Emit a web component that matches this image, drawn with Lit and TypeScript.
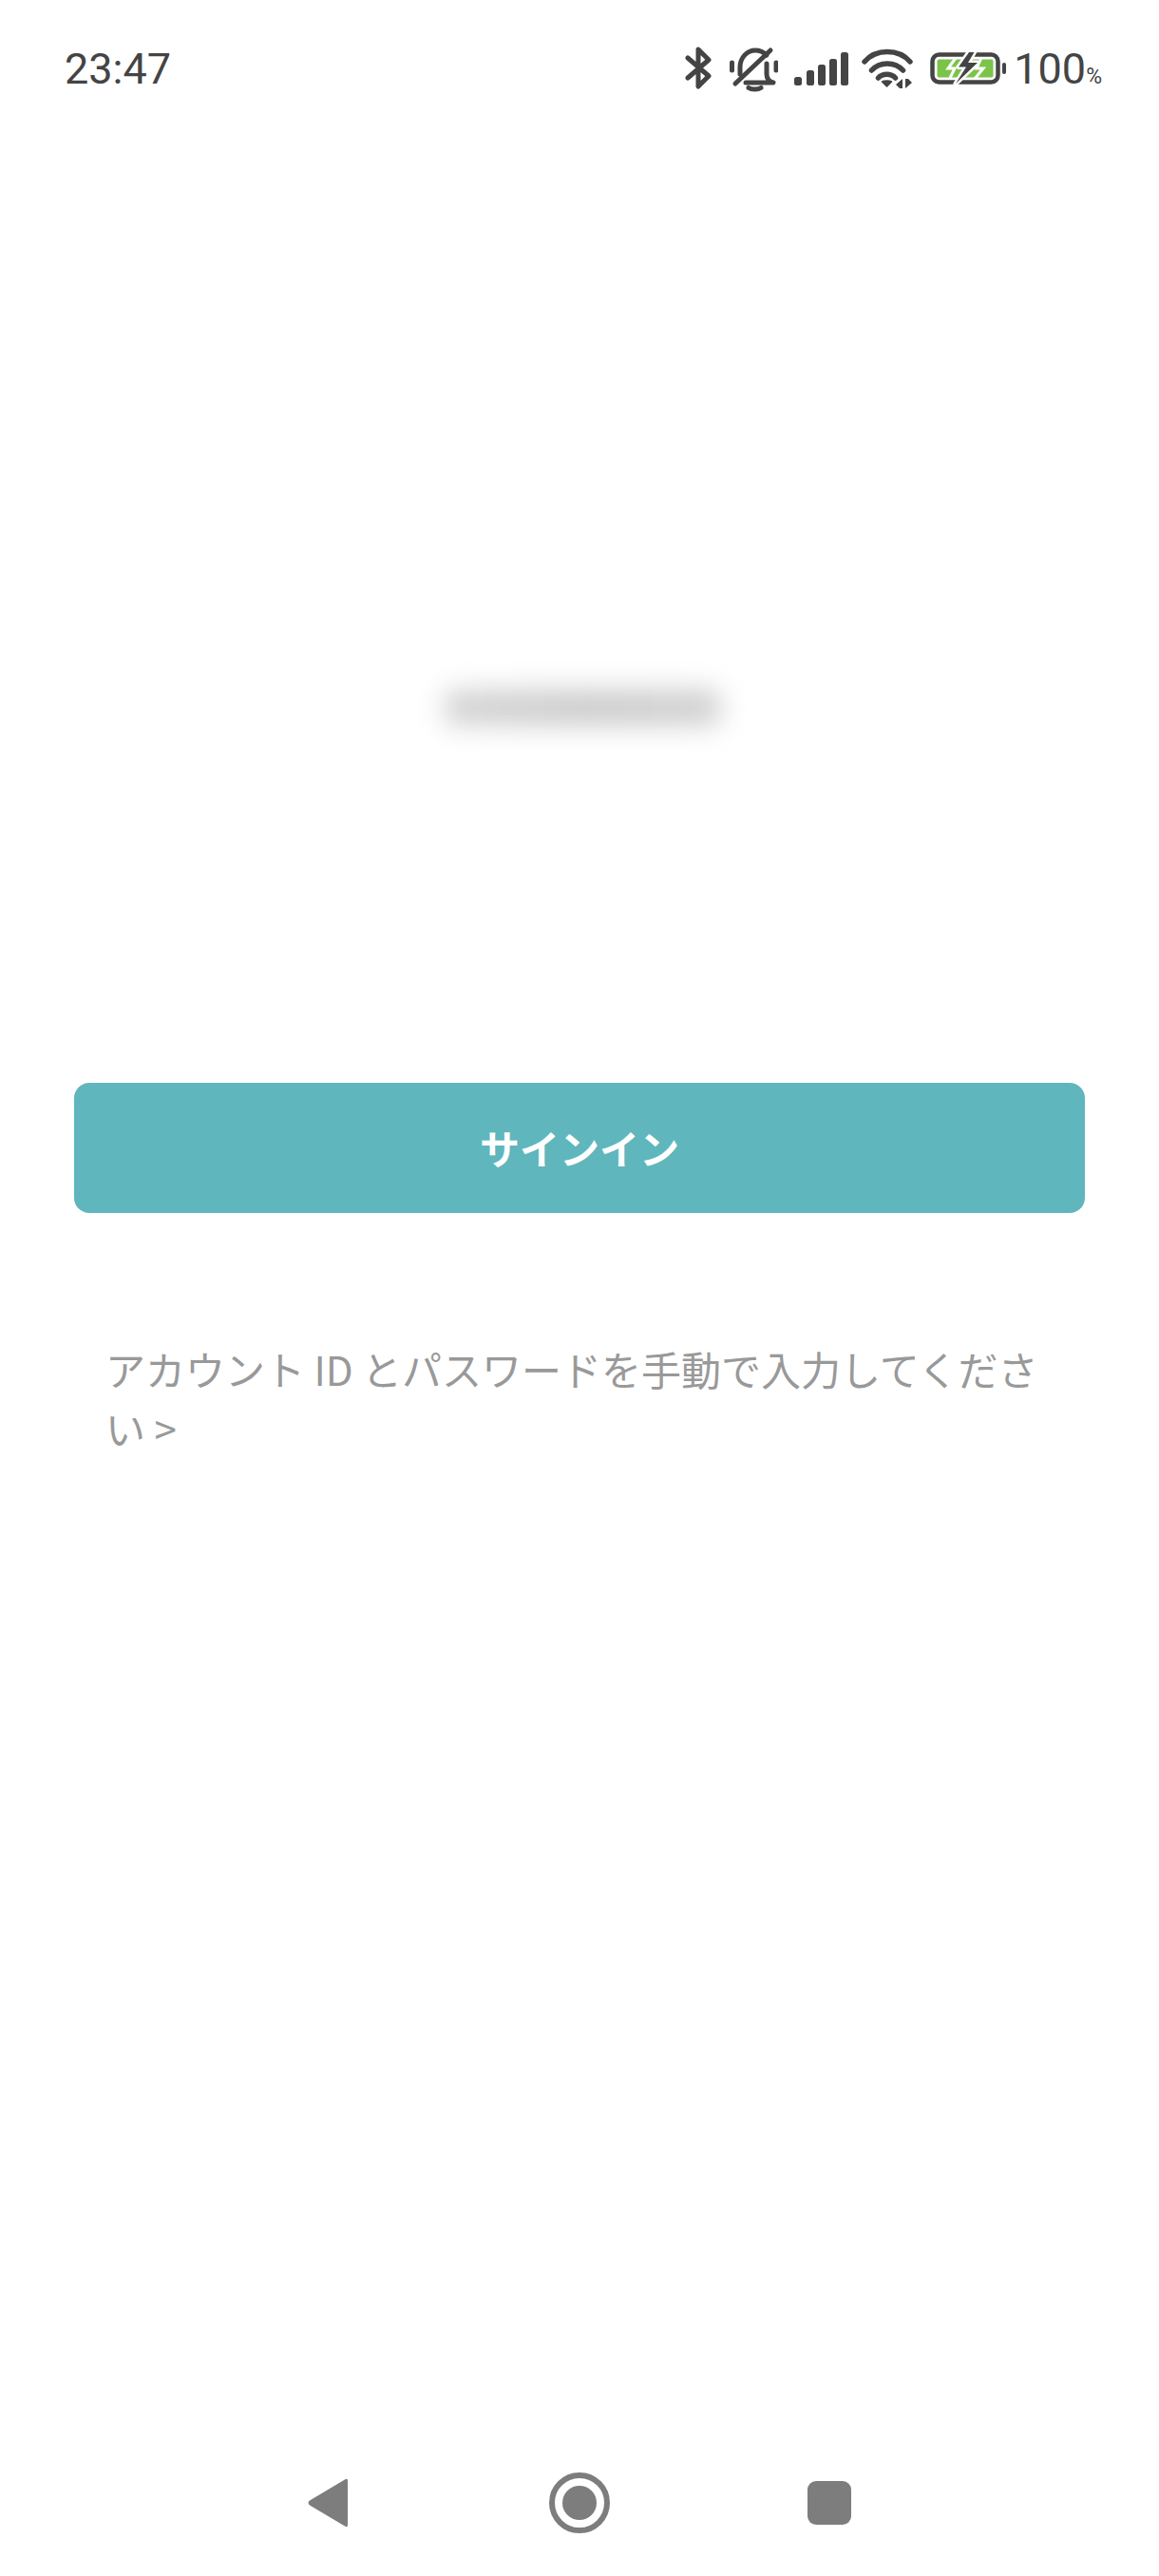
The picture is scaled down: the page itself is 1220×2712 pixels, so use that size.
import { LitElement, html, css, svg } from "lit";
import { customElement } from "lit/decorators.js";

const bluetooth = svg`<path d="M3 14 25 33 14 44V5L25 16 3 35" fill="none" stroke="#444" stroke-width="5" stroke-linecap="round" stroke-linejoin="round"/>`;
const bell = svg`<g fill="none" stroke="#444" stroke-width="5" stroke-linecap="round" stroke-linejoin="round">
  <path d="M2.500 19v8M49 19v8"/>
  <path d="M11 31V24C11 13 19 6 27 6 32 6 36 8 39 11"/>
  <path d="M39 20V31C39 36 42 39 46 40H17"/>
  <path d="M6 41 43 6"/>
  <path d="M20 45.500C23 47.500 30 47.500 33 45.500"/>
</g>`;
const signal = svg`<g fill="#444">
  <rect x="0" y="34" width="8" height="9" rx="2.500"/>
  <rect x="13" y="27" width="8" height="16" rx="2.500"/>
  <rect x="25" y="21" width="8" height="22" rx="2.500"/>
  <rect x="37" y="15" width="8" height="28" rx="2.500"/>
  <rect x="49" y="8" width="8" height="35" rx="2.500"/>
</g>`;
const wifi = svg`<g fill="none" stroke="#444" stroke-width="5.500" stroke-linecap="round">
  <path d="M3 18C15 4 39 4 51 18"/>
  <path d="M10.500 27C19 17.500 35 17.500 43.500 27"/>
  <path d="M17.500 35C22 30 31 30 35.500 35"/>
</g>
<path d="M21.500 39C24 37.500 29 37.500 31.500 39L26.500 44Z" fill="#444" stroke="#444" stroke-width="1.500" stroke-linejoin="round"/>
<path d="M43 36V46H40L36 42ZM46 46V36H49L53 40Z" fill="#444"/>`;
const battery = svg`<rect x="2.500" y="10.500" width="69" height="29" rx="7" fill="none" stroke="#444" stroke-width="4.500"/>
<rect x="7.500" y="15.500" width="59" height="19" rx="2" fill="#7cc34a"/>
<rect x="76" y="19" width="4" height="12" rx="2" fill="#444"/>
<path d="M27 14 19 25H26L21 35" fill="none" stroke="#fff" stroke-width="3"/>
<path d="M54 14 49 25H56L47 36" fill="none" stroke="#fff" stroke-width="3"/>
<path d="M41 8 30 23.500H38L27 41 50 19H40L46.500 8Z" fill="#444" stroke="#fff" stroke-width="5" stroke-linejoin="round" paint-order="stroke"/>`;
const back = svg`<path d="M39 2.500Q42 .5 42 4V50Q42 53.500 39 51.500L2 29.500Q-1 27 2 24.500Z" fill="#7d7d7d"/>`;

@customElement("app-root")
export class AppRoot extends LitElement {
  static styles = css`
    :host {
      display: flex;
      flex-direction: column;
      width: 1220px;
      height: 2712px;
      background: #fff;
      font-family: "Noto Sans CJK JP", "Noto Sans", sans-serif;
    }
    .status {
      display: flex;
      align-items: center;
      height: 50px;
      margin-top: 47px;
      padding-left: 68px;
      color: #444;
      font-family: Roboto, sans-serif;
    }
    .time {
      font-size: 45px;
      line-height: 50px;
      padding-top: 2px;
      flex: 1;
    }
    .icons {
      display: flex;
      align-items: center;
      height: 50px;
    }
    .icons svg {
      display: block;
      height: 50px;
    }
    .bt { width: 28px; margin-right: 19px; }
    .bl { width: 51px; margin-right: 17px; }
    .si { width: 57px; margin-right: 14px; }
    .wi { width: 54px; margin-right: 18px; }
    .ba { width: 81px; margin-right: 7px; }
    .pct {
      font-size: 45px;
      line-height: 50px;
      margin-top: 10px;
      margin-right: 60px;
      white-space: nowrap;
    }
    .pct small {
      font-size: 23px;
      margin-left: 0;
    }
    .account {
      width: 290px;
      height: 38px;
      margin: 629px 0 0 468px;
      background: linear-gradient(90deg, #d4d4d4, #cbcbcb 50%, #d0d0d0);
      border-radius: 8px;
      filter: blur(14px);
    }
    .signin {
      box-sizing: border-box;
      display: flex;
      align-items: center;
      justify-content: center;
      height: 137px;
      margin: 376px 78px 0;
      padding-bottom: 3px;
      border-radius: 16px;
      background: #5fb6bd;
      color: #fff;
      font-size: 42px;
      font-weight: 700;
    }
    .manual {
      width: 1000px;
      margin: 133px 0 0 111px;
      color: #999;
      font-size: 42px;
      line-height: 62px;
    }
    .nav {
      display: flex;
      align-items: center;
      height: 64px;
      margin-top: auto;
      margin-bottom: 45px;
      padding-left: 324px;
    }
    .back { width: 42px; height: 54px; display: block; }
    .home {
      box-sizing: border-box;
      display: flex;
      align-items: center;
      justify-content: center;
      width: 64px;
      height: 64px;
      margin-left: 212px;
      border: 6px solid #7d7d7d;
      border-radius: 50%;
    }
    .home span {
      width: 36px;
      height: 36px;
      border-radius: 50%;
      background: #7d7d7d;
    }
    .recents {
      width: 46px;
      height: 46px;
      margin-left: 208px;
      border-radius: 9px;
      background: #7d7d7d;
    }
  `;

  render() {
    return html`
      <div class="status">
        <div class="time">23:47</div>
        <div class="icons">
          <svg class="bt" viewBox="0 0 28 50">${bluetooth}</svg>
          <svg class="bl" viewBox="0 0 51 50">${bell}</svg>
          <svg class="si" viewBox="0 0 57 50">${signal}</svg>
          <svg class="wi" viewBox="0 0 54 50">${wifi}</svg>
          <svg class="ba" viewBox="0 0 81 50">${battery}</svg>
          <div class="pct">100<small>%</small></div>
        </div>
      </div>
      <div class="account"></div>
      <div class="signin">サインイン</div>
      <div class="manual">アカウント ID とパスワードを手動で入力してください &gt;</div>
      <div class="nav">
        <svg class="back" viewBox="0 0 42 54">${back}</svg>
        <div class="home"><span></span></div>
        <div class="recents"></div>
      </div>
    `;
  }
}
